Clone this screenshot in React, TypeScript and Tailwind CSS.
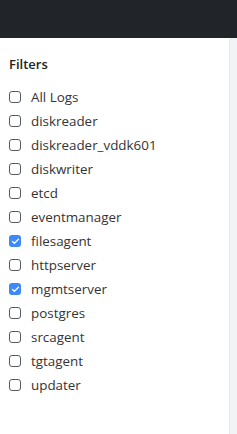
import { Check } from 'lucide-react'

const filters = [
  { name: 'All Logs', on: false },
  { name: 'diskreader', on: false },
  { name: 'diskreader_vddk601', on: false },
  { name: 'diskwriter', on: false },
  { name: 'etcd', on: false },
  { name: 'eventmanager', on: false },
  { name: 'filesagent', on: true },
  { name: 'httpserver', on: false },
  { name: 'mgmtserver', on: true },
  { name: 'postgres', on: false },
  { name: 'srcagent', on: false },
  { name: 'tgtagent', on: false },
  { name: 'updater', on: false },
]

export default function App() {
  return (
    <div className="w-[237px] h-[434px] flex flex-col bg-white font-['Open_Sans',sans-serif] text-[#333]">
      <div className="h-[38px] bg-[#212529] shrink-0" />
      <div className="flex flex-1">
        <div className="flex-1 pl-[9px] pt-[18px]">
          <h2 className="text-[13px] font-semibold leading-[16px] mb-[13px] text-[#222]">Filters</h2>
          <ul className="flex flex-col">
            {filters.map((f) => (
              <li key={f.name} className="h-[24px] flex items-center gap-[10px] text-[13.4px]">
                {f.on ? (
                  <span className="w-[12px] h-[12px] rounded-[3px] bg-[#3d8af7] flex items-center justify-center">
                    <Check size={9} strokeWidth={3.5} className="text-white" />
                  </span>
                ) : (
                  <span className="w-[12px] h-[12px] rounded-[3px] border border-[#555b61] bg-white" />
                )}
                <span>{f.name}</span>
              </li>
            ))}
          </ul>
        </div>
        <div className="w-[8px] bg-[#f1f3f5] border-l border-[#e9ecef]" />
      </div>
    </div>
  )
}
